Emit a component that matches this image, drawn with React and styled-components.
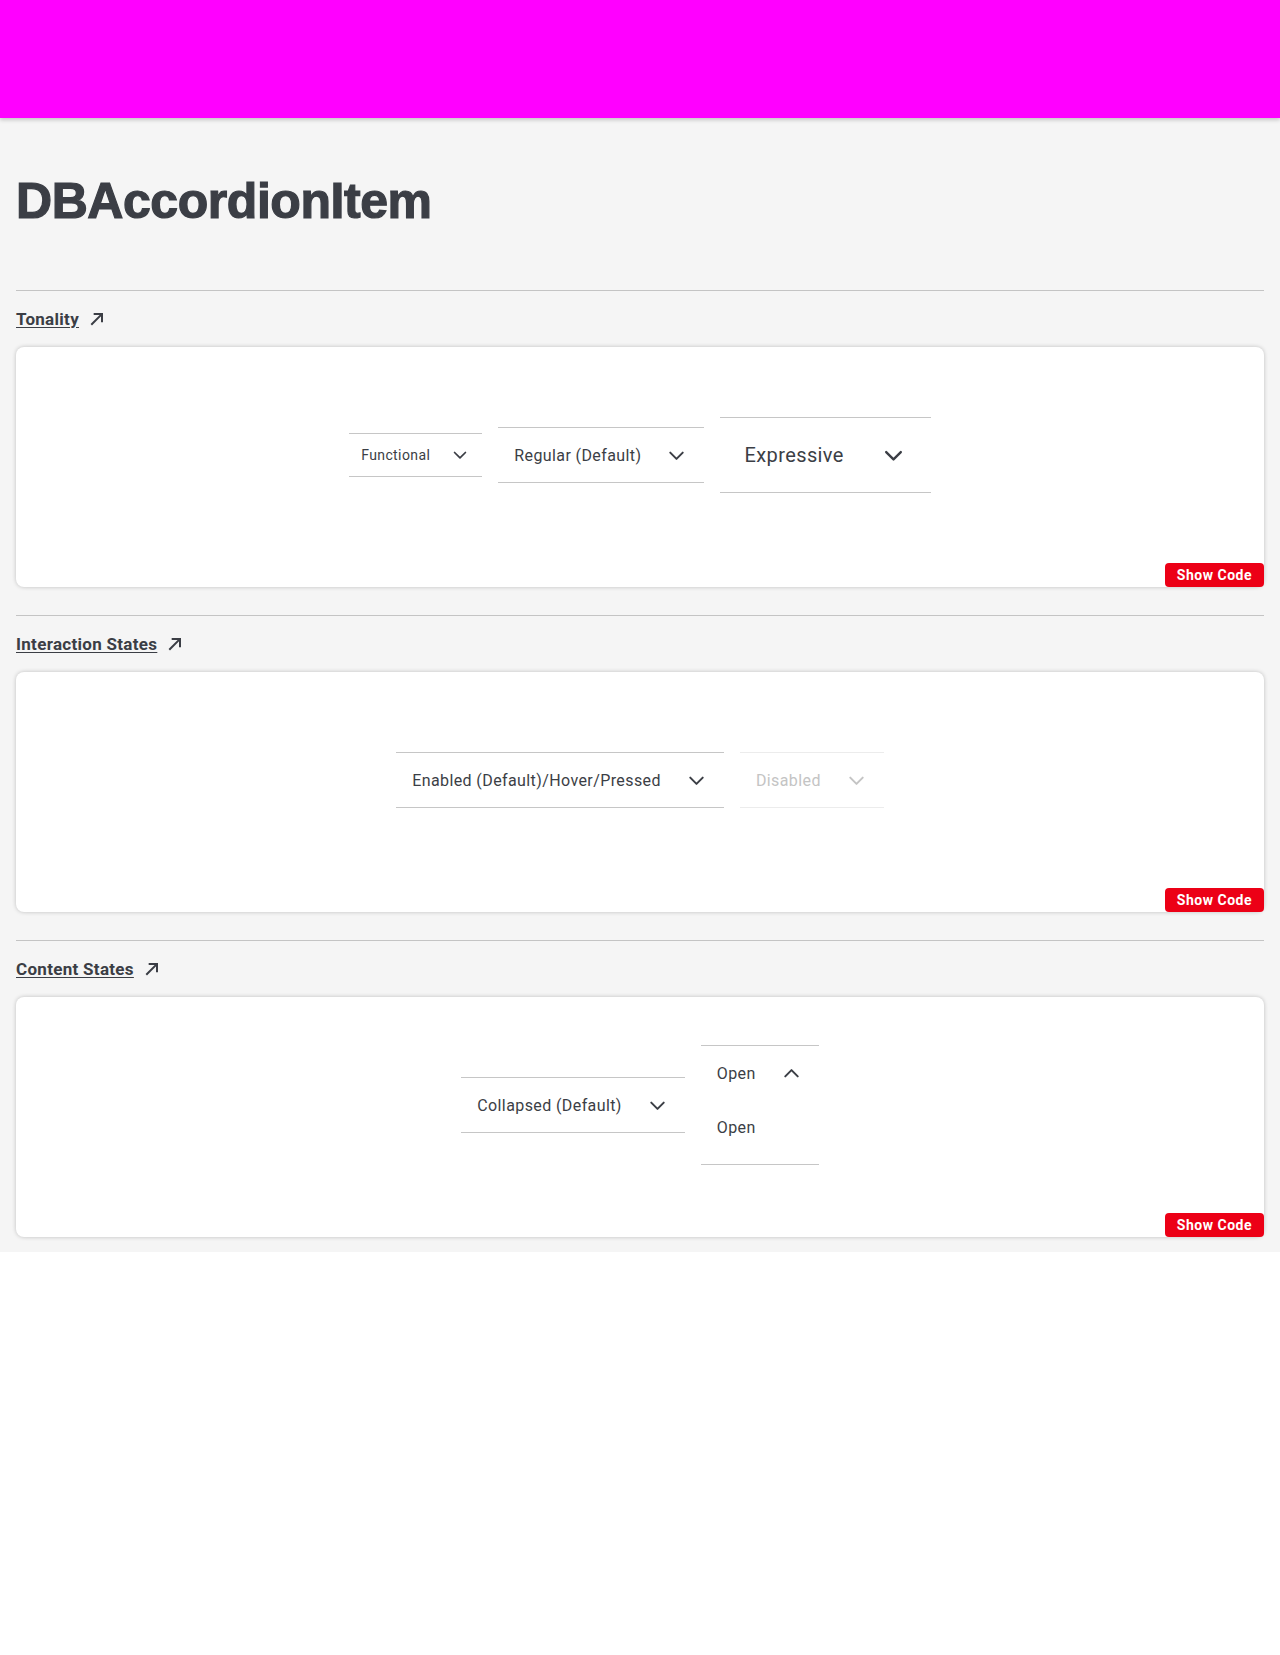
import React from "react";
import styled, { createGlobalStyle } from "styled-components";

const GlobalStyle = createGlobalStyle`
  body {
    margin: 0;
    background: #ffffff;
    font-family: Roboto, "Liberation Sans", Arial, sans-serif;
    color: #3b3e45;
  }
`;

const sizes = {
  small: { height: 42, font: 14, padX: 12, gap: 20, icon: 20 },
  medium: { height: 54, font: 16, padX: 16, gap: 24, icon: 23 },
  large: { height: 74, font: 20, padX: 24, gap: 36, icon: 27 },
};

const sections = [
  {
    title: "Tonality",
    items: [
      { label: "Functional", size: "small" },
      { label: "Regular (Default)", size: "medium" },
      { label: "Expressive", size: "large" },
    ],
  },
  {
    title: "Interaction States",
    items: [
      { label: "Enabled (Default)/Hover/Pressed", size: "medium" },
      { label: "Disabled", size: "medium", disabled: true },
    ],
  },
  {
    title: "Content States",
    items: [
      { label: "Collapsed (Default)", size: "medium" },
      { label: "Open", size: "medium", open: true, content: "Open" },
    ],
  },
];

const Header = styled.header`
  height: 118px;
  background: #ff00ff;
  box-shadow: 0 2px 4px rgba(0, 0, 0, 0.2);
  position: relative;
`;

const Main = styled.main`
  background: #f5f5f5;
  padding: 58px 16px 15px;
  display: flex;
  flex-direction: column;
  gap: 28px;
`;

const Title = styled.h1`
  margin: 0 0 36px;
  font-family: "Liberation Sans", Arial, sans-serif;
  font-weight: 700;
  font-size: 50px;
  line-height: 50px;
  letter-spacing: -0.45px;
  -webkit-text-stroke: 1.2px #3b3e45;
  color: #3b3e45;
`;

const Section = styled.section`
  border-top: 1px solid #c4c4c4;
  padding-top: 16px;
`;

const SectionLink = styled.a`
  display: inline-flex;
  align-items: center;
  gap: 10px;
  height: 24px;
  margin-bottom: 16px;
  font-size: 17px;
  font-weight: 700;
  letter-spacing: 0.3px;
  color: #3b3e45;
  text-decoration: underline;
  text-decoration-thickness: 1px;
  text-underline-offset: 2px;
  cursor: pointer;
`;

const Card = styled.div`
  height: 240px;
  background: #ffffff;
  border-radius: 8px;
  box-shadow: 0 0 4px rgba(0, 0, 0, 0.22);
  display: flex;
  flex-direction: column;
`;

const Demo = styled.div`
  flex: 1;
  display: flex;
  align-items: center;
  justify-content: center;
  gap: 16px;
`;

const ShowCode = styled.button`
  align-self: flex-end;
  height: 24px;
  padding: 0 12px;
  border: none;
  border-radius: 4px;
  background: #ec0016;
  color: #ffffff;
  font-family: Roboto, "Liberation Sans", Arial, sans-serif;
  font-size: 14px;
  font-weight: 700;
  letter-spacing: 0.5px;
  cursor: pointer;
`;

const Item = styled.div`
  border-top: 1px solid ${(p) => (p.$disabled ? "#ececec" : "#c6c6c6")};
  border-bottom: 1px solid ${(p) => (p.$disabled ? "#ececec" : "#c6c6c6")};
  color: ${(p) => (p.$disabled ? "#c4c4c4" : "#3b3e45")};
  letter-spacing: 0.025em;
`;

const Summary = styled.div`
  display: flex;
  align-items: center;
  gap: ${(p) => sizes[p.$size].gap}px;
  height: ${(p) => sizes[p.$size].height}px;
  padding: 0 ${(p) => sizes[p.$size].padX}px;
  font-size: ${(p) => sizes[p.$size].font}px;
  white-space: nowrap;
`;

const Chevron = styled.svg`
  flex: none;
  display: block;
`;

const Content = styled.div`
  padding: 16px 16px 24px;
  font-size: 16px;
  line-height: 24px;
`;

const ChevronIcon = ({ size, up }) => (
  <Chevron width={size} height={size} viewBox="0 0 24 24" fill="none">
    <path
      d={up ? "M5.5 15l6.5-6.5 6.5 6.5" : "M5.5 9l6.5 6.5 6.5-6.5"}
      stroke="currentColor"
      strokeWidth="2.1"
      strokeLinecap="round"
      strokeLinejoin="round"
    />
  </Chevron>
);

const ArrowIcon = () => (
  <svg width="16" height="16" viewBox="0 0 24 24" fill="none">
    <path
      d="M4.5 19.5L18.5 5.5M8.5 4.5h11V15.5"
      stroke="currentColor"
      strokeWidth="3"
      strokeLinecap="square"
    />
  </svg>
);

const AccordionItem = ({ item }) => (
  <Item $disabled={item.disabled}>
    <Summary $size={item.size}>
      <span>{item.label}</span>
      <ChevronIcon size={sizes[item.size].icon} up={item.open} />
    </Summary>
    {item.open && <Content>{item.content}</Content>}
  </Item>
);

const App = () => (
  <>
    <GlobalStyle />
    <Header />
    <Main>
      <Title>DBAccordionItem</Title>
      {sections.map((section) => (
        <Section key={section.title}>
          <SectionLink>
            {section.title}
            <ArrowIcon />
          </SectionLink>
          <Card>
            <Demo>
              {section.items.map((item) => (
                <AccordionItem key={item.label} item={item} />
              ))}
            </Demo>
            <ShowCode>Show Code</ShowCode>
          </Card>
        </Section>
      ))}
    </Main>
  </>
);

export default App;
